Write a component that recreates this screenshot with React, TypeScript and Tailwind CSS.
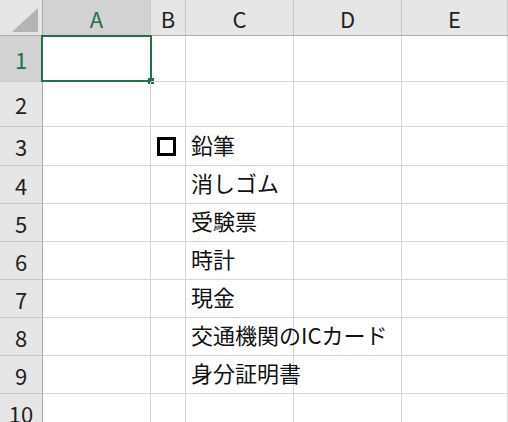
import React from 'react'

const cols = ['A', 'B', 'C', 'D', 'E']
const colW = ['w-[108px]', 'w-[35px]', 'w-[108px]', 'w-[108px]', 'flex-1']
const rowH = ['h-[46px]', 'h-[45px]', 'h-[39px]', 'h-[38px]', 'h-[38px]', 'h-[38px]', 'h-[38px]', 'h-[38px]', 'h-[38px]', 'h-[38px]']

const items: Record<number, string> = {
  3: '鉛筆',
  4: '消しゴム',
  5: '受験票',
  6: '時計',
  7: '現金',
  8: '交通機関のICカード',
  9: '身分証明書',
}

export default function App() {
  return (
    <div className="h-[422px] w-[508px] overflow-hidden bg-white font-['Noto_Sans_CJK_JP',sans-serif] text-[#1f1f1f]">
      {/* column headers */}
      <div className="flex h-[36px] border-b border-[#ababab] bg-[#e6e6e6]">
        <div className="relative w-[43px] shrink-0 border-r border-[#ababab]">
          <div className="absolute right-[4px] bottom-[3px] h-0 w-0 border-b-[24px] border-l-[26px] border-b-[#b4b4b4] border-l-transparent" />
        </div>
        {cols.map((c, i) => (
          <div
            key={c}
            className={`${colW[i]} flex shrink-0 items-center justify-center border-r border-[#c8c8c8] text-[22px] leading-none ${i === 0 ? 'bg-[#d2d2d2] text-[#217346]' : ''}`}
          >
            {c}
          </div>
        ))}
      </div>

      {rowH.map((h, r) => {
        const n = r + 1
        return (
          <div key={n} className={`flex ${h}`}>
            <div
              className={`flex w-[43px] shrink-0 items-center justify-center border-r border-b border-r-[#ababab] border-b-[#c8c8c8] text-[22px] leading-none ${n === 1 ? 'bg-[#d2d2d2] text-[#217346]' : 'bg-[#e6e6e6]'}`}
            >
              {n}
            </div>
            {cols.map((c, i) => (
              <div key={c} className={`${colW[i]} relative flex shrink-0 items-center border-r border-b border-[#d4d4d4]`}>
                {n === 1 && c === 'A' && (
                  <div className="absolute -top-[1px] -left-[2px] h-[47px] w-[111px] border-2 border-[#217346]">
                    <div className="absolute -right-[4px] -bottom-[4px] h-[6px] w-[6px] bg-[#217346]" />
                  </div>
                )}
                {n === 3 && c === 'B' && <div className="ml-[6px] h-[19px] w-[19px] border-[3px] border-black" />}
                {c === 'C' && items[n] && (
                  <span className="pb-[5px] pl-[5px] text-[22px] leading-none whitespace-nowrap text-[#111]">{items[n]}</span>
                )}
              </div>
            ))}
          </div>
        )
      })}
    </div>
  )
}
